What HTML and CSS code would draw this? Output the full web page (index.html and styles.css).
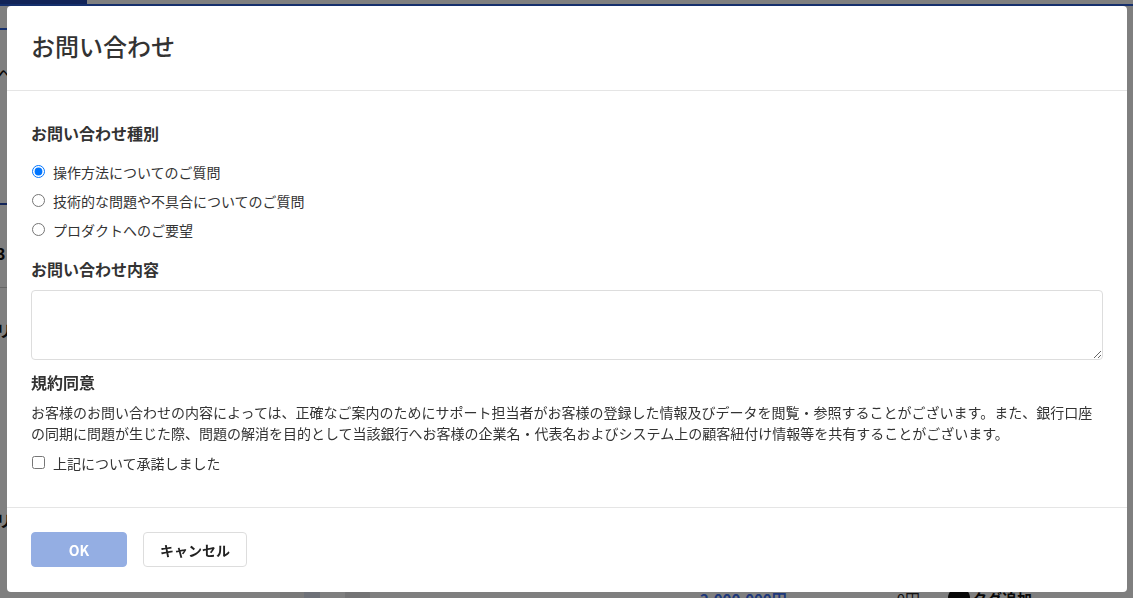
FILE: index.html
```html
<!DOCTYPE html>
<html lang="ja">
<head>
<meta charset="utf-8">
<title>お問い合わせ</title>
<link rel="stylesheet" href="styles.css">
</head>
<body>
<div class="page">
  <div class="topbar"><div class="topbar-active"></div></div>
  <div class="bg-side">
    <div class="bg-tabline"></div>
    <div class="bg-chevron">へ</div>
    <div class="bg-rule-blue"></div>
    <div class="bg-num">3</div>
    <div class="bg-rule"></div>
    <div class="bg-label">リ</div>
    <div class="bg-label bg-label-low">リ</div>
  </div>
  <div class="bg-row">
    <span class="bg-block"><span class="bg-block-inner"></span></span>
    <span class="bg-pill"></span>
    <span class="bg-amount">2,000,000円</span>
    <span class="bg-zero">0円</span>
    <span class="bg-tag"><span class="bg-tag-icon"></span>タグ追加</span>
  </div>
</div>

<div class="overlay">
  <div class="modal" role="dialog" aria-labelledby="modal-title">
    <header class="modal-header">
      <h2 class="modal-title" id="modal-title">お問い合わせ</h2>
    </header>
    <div class="modal-body">
      <h3 class="section-title">お問い合わせ種別</h3>
      <div class="radio-group">
        <label class="choice"><input type="radio" name="kind" checked><span>操作方法についてのご質問</span></label>
        <label class="choice"><input type="radio" name="kind"><span>技術的な問題や不具合についてのご質問</span></label>
        <label class="choice"><input type="radio" name="kind"><span>プロダクトへのご要望</span></label>
      </div>
      <h3 class="section-title section-title-content">お問い合わせ内容</h3>
      <textarea class="textarea"></textarea>
      <h3 class="section-title section-title-terms">規約同意</h3>
      <p class="terms">お客様のお問い合わせの内容によっては、正確なご案内のためにサポート担当者がお客様の登録した情報及びデータを閲覧・参照することがございます。また、銀行口座の同期に問題が生じた際、問題の解消を目的として当該銀行へお客様の企業名・代表名およびシステム上の顧客紐付け情報等を共有することがございます。</p>
      <label class="choice choice-check"><input type="checkbox"><span>上記について承諾しました</span></label>
    </div>
    <footer class="modal-footer">
      <button class="btn btn-primary" type="button" disabled>OK</button>
      <button class="btn btn-default" type="button">キャンセル</button>
    </footer>
  </div>
</div>
</body>
</html>
```

FILE: styles.css
```css
* {
  box-sizing: border-box;
}

html, body {
  margin: 0;
  padding: 0;
  height: 100%;
}

body {
  font-family: "Noto Sans CJK JP", "Noto Sans", sans-serif;
  color: #333;
  background: #fff;
  overflow: hidden;
}

/* ---------- background page (under the overlay) ---------- */
.page {
  height: 100vh;
  display: flex;
  flex-direction: column;
  overflow: hidden;
}

.topbar {
  height: 6px;
  border-bottom: 2px solid #2b5fd9;
  display: flex;
  flex-shrink: 0;
}

.topbar-active {
  width: 87px;
  background: #2448b0;
}

.bg-side {
  display: flex;
  flex-direction: column;
  margin-left: -4px;
  width: 60px;
  font-weight: bold;
  font-size: 16px;
  color: #111;
  flex-shrink: 0;
}

.bg-tabline {
  height: 2px;
  margin-top: 22px;
  background: #2b5fd9;
}

.bg-chevron {
  margin-top: 32px;
  height: 24px;
  line-height: 24px;
  font-weight: normal;
  font-size: 18px;
}

.bg-rule-blue {
  margin-top: 117px;
  height: 2px;
  background: #2448b0;
}

.bg-num {
  margin-top: 36px;
  height: 24px;
  line-height: 24px;
}

.bg-rule {
  margin-top: 22px;
  height: 1px;
  background: #ccc;
}

.bg-label {
  margin-top: 30px;
  height: 24px;
  line-height: 24px;
}

.bg-label-low {
  margin-top: 166px;
}

.bg-row {
  margin-top: auto;
  margin-bottom: -12px;
  height: 24px;
  display: flex;
  align-items: center;
  font-size: 15px;
  font-weight: bold;
  flex-shrink: 0;
  white-space: nowrap;
}

.bg-block {
  margin-left: 280px;
  width: 40px;
  height: 24px;
  background: #f3f3f3;
  display: flex;
  justify-content: flex-end;
}

.bg-block-inner {
  width: 16px;
  height: 24px;
  background: #dde2f0;
}

.bg-pill {
  margin-left: 25px;
  width: 25px;
  height: 24px;
  border-radius: 8px;
  background: #e8e8ea;
}

.bg-amount {
  margin-left: 330px;
  color: #3b6ef5;
}

.bg-zero {
  margin-left: 110px;
  font-weight: normal;
  color: #222;
}

.bg-tag {
  margin-left: 28px;
  display: flex;
  align-items: center;
  gap: 2px;
  color: #111;
}

.bg-tag-icon {
  width: 22px;
  height: 22px;
  border-radius: 50%;
  background: #111;
}

/* ---------- overlay + modal ---------- */
.overlay {
  position: fixed;
  inset: 0;
  background: rgba(0, 0, 0, 0.5);
  padding: 6px 6px 6px 7px;
}

.modal {
  width: 1120px;
  height: 586px;
  background: #fff;
  border-radius: 4px;
  display: flex;
  flex-direction: column;
}

.modal-header {
  padding: 22px 24px 26px;
  border-bottom: 1px solid #e5e5e5;
}

.modal-title {
  margin: 0;
  font-size: 24px;
  line-height: 36px;
  font-weight: 500;
  color: #333;
}

.modal-body {
  flex: 1;
  padding: 30px 24px 0;
  display: flex;
  flex-direction: column;
  align-items: flex-start;
}

.section-title {
  margin: 0;
  font-size: 16px;
  line-height: 24px;
  font-weight: bold;
  color: #333;
}

.section-title-content {
  margin-top: 13px;
}

.section-title-terms {
  margin-top: 10px;
}

.radio-group {
  margin-top: 12px;
  display: flex;
  flex-direction: column;
}

.choice {
  display: flex;
  align-items: center;
  gap: 8px;
  height: 29px;
  font-size: 14px;
  color: #333;
  cursor: pointer;
}

.choice input {
  margin: 0 0 0 1px;
  width: 13px;
  height: 13px;
}

.choice-check {
  margin-top: 8px;
  height: 21px;
}

.textarea {
  margin-top: 9px;
  width: 100%;
  height: 70px;
  border: 1px solid #ddd;
  border-radius: 4px;
  resize: vertical;
  font: inherit;
  padding: 6px 10px;
}

.terms {
  margin: 8px 0 0;
  font-size: 14px;
  line-height: 21px;
  color: #333;
}

.modal-footer {
  border-top: 1px solid #e5e5e5;
  padding: 24px 24px 25px;
  display: flex;
  gap: 16px;
}

.btn {
  height: 35px;
  border-radius: 4px;
  font-family: inherit;
  font-size: 14px;
  font-weight: bold;
  padding: 0 16px;
  cursor: pointer;
}

.btn-primary {
  width: 96px;
  background: #94aee3;
  border: 1px solid #94aee3;
  color: #fff;
}

.btn-default {
  background: #fff;
  border: 1px solid #ddd;
  color: #222;
}
```
